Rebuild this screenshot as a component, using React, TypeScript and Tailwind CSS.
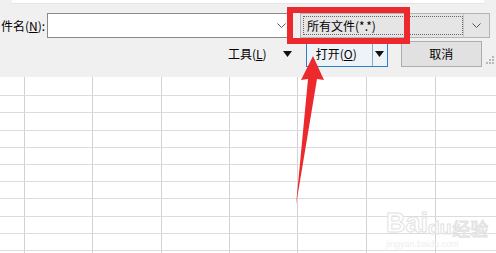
import React from 'react';

const font = { fontFamily: '"Noto Sans CJK SC", "Microsoft YaHei", "Liberation Sans", sans-serif' };

const Chevron = ({ className = '' }: { className?: string }) => (
  <svg width="9" height="6" viewBox="0 0 9 6" className={className}>
    <path d="M0.5 0.5 L4.5 4.5 L8.5 0.5" fill="none" stroke="#555" strokeWidth="1" />
  </svg>
);

const Caret = () => (
  <svg width="9" height="6" viewBox="0 0 9 6">
    <path d="M0 0 H9 L4.5 6 Z" fill="#111" />
  </svg>
);

const cols = [25, 68, 69, 68, 68, 69, 69, 69];

const Sheet = () => {
  const rows = [19, 17, 18, 17, 17, 17, 17, 18, 17, 17, 17];
  return (
    <div className="flex flex-col bg-white">
      {rows.map((h, r) => (
        <div key={r} className="flex border-b border-[#dcdcdc]" style={{ height: h }}>
          {cols.map((w, c) => (
            <div key={c} className="shrink-0 border-r border-[#d2d2d2]" style={{ width: w }} />
          ))}
        </div>
      ))}
    </div>
  );
};

export default function App() {
  return (
    <div className="relative h-[253px] w-[496px] overflow-hidden bg-white text-[12px] text-black" style={font}>
      {/* dialog */}
      <div className="flex h-[77px] flex-col bg-[#f0f0f0] shadow-[0_2px_4px_rgba(0,0,0,0.25)]">
        <div className="mx-[12px] h-[4px] bg-white border-b border-[#e6e6e6]" />
        <div className="mt-[9px] flex h-[25px] items-center">
          <span className="w-[47px] shrink-0 pl-[1px] leading-none">件名(<span className="underline">N</span>):</span>
          <div className="flex h-[25px] w-[244px] items-center justify-end border border-[#8a8a8a] bg-white pr-[4px]">
            <Chevron />
          </div>
          <div className="ml-[9px] flex h-[25px] w-[190px] items-center border border-[#b4b4b4] bg-[#e5e5e5]">
            <div className="ml-[2px] flex h-[19px] w-[160px] items-center border border-dotted border-[#666] pl-[3px]">所有文件(*.*)</div>
            <div className="flex flex-1 items-center justify-center border-l border-[#c8c8c8] h-full">
              <Chevron />
            </div>
          </div>
        </div>
        <div className="mt-[2px] flex h-[27px] items-center">
          <span className="ml-[228px] leading-none">工具(<span className="underline">L</span>)</span>
          <span className="ml-[16px]"><Caret /></span>
          <div className="ml-[14px] flex h-[27px] w-[82px] items-center border border-[#2f7fc8] bg-[#eef3f8]">
            <span className="flex-1 pl-[9px] leading-none">打开(<span className="underline">O</span>)</span>
            <div className="flex h-full w-[15px] items-center justify-center border-l border-[#8aa8c8]">
              <Caret />
            </div>
          </div>
          <div className="ml-[13px] flex h-[26px] w-[81px] items-center justify-center border border-[#adadad] bg-[#e1e1e1]">取消</div>
          <div className="ml-auto mr-[2px] mt-[12px] grid grid-cols-3 gap-[1px]">
            {[0, 0, 1, 0, 1, 1, 1, 1, 1].map((v, i) => (
              <div key={i} className={`h-[2px] w-[2px] ${v ? 'bg-[#b8b8b8]' : ''}`} />
            ))}
          </div>
        </div>
      </div>

      <Sheet />

      {/* watermark */}
      <div className="absolute left-[386px] top-[210px] flex flex-col items-start text-white [-webkit-text-stroke:1px_#e2e2e2]">
        <div className="flex items-end leading-none">
          <span className="text-[27px] font-bold" style={{ fontFamily: '"Liberation Sans", sans-serif' }}>Bai</span>
          <span className="text-[19px] font-bold" style={{ fontFamily: '"Liberation Sans", sans-serif' }}>du</span>
          <span className="ml-[1px] text-[18px]">经验</span>
        </div>
        <span className="mt-[3px] text-[9px] leading-none text-[#eeeeee] [-webkit-text-stroke:0px]" style={{ fontFamily: '"Liberation Sans", sans-serif' }}>jingyan.baidu.com</span>
      </div>

      {/* annotation */}
      <div className="absolute left-[287px] top-[7px] h-[37px] w-[123px] border-[6px] border-[#ec2a2e]" />
      <svg className="absolute left-0 top-0" width="496" height="253" viewBox="0 0 496 253">
        <polygon points="313,56 324,80 317,79 296,205 308,79 301,80" fill="#ec2a2e" />
      </svg>
    </div>
  );
}
